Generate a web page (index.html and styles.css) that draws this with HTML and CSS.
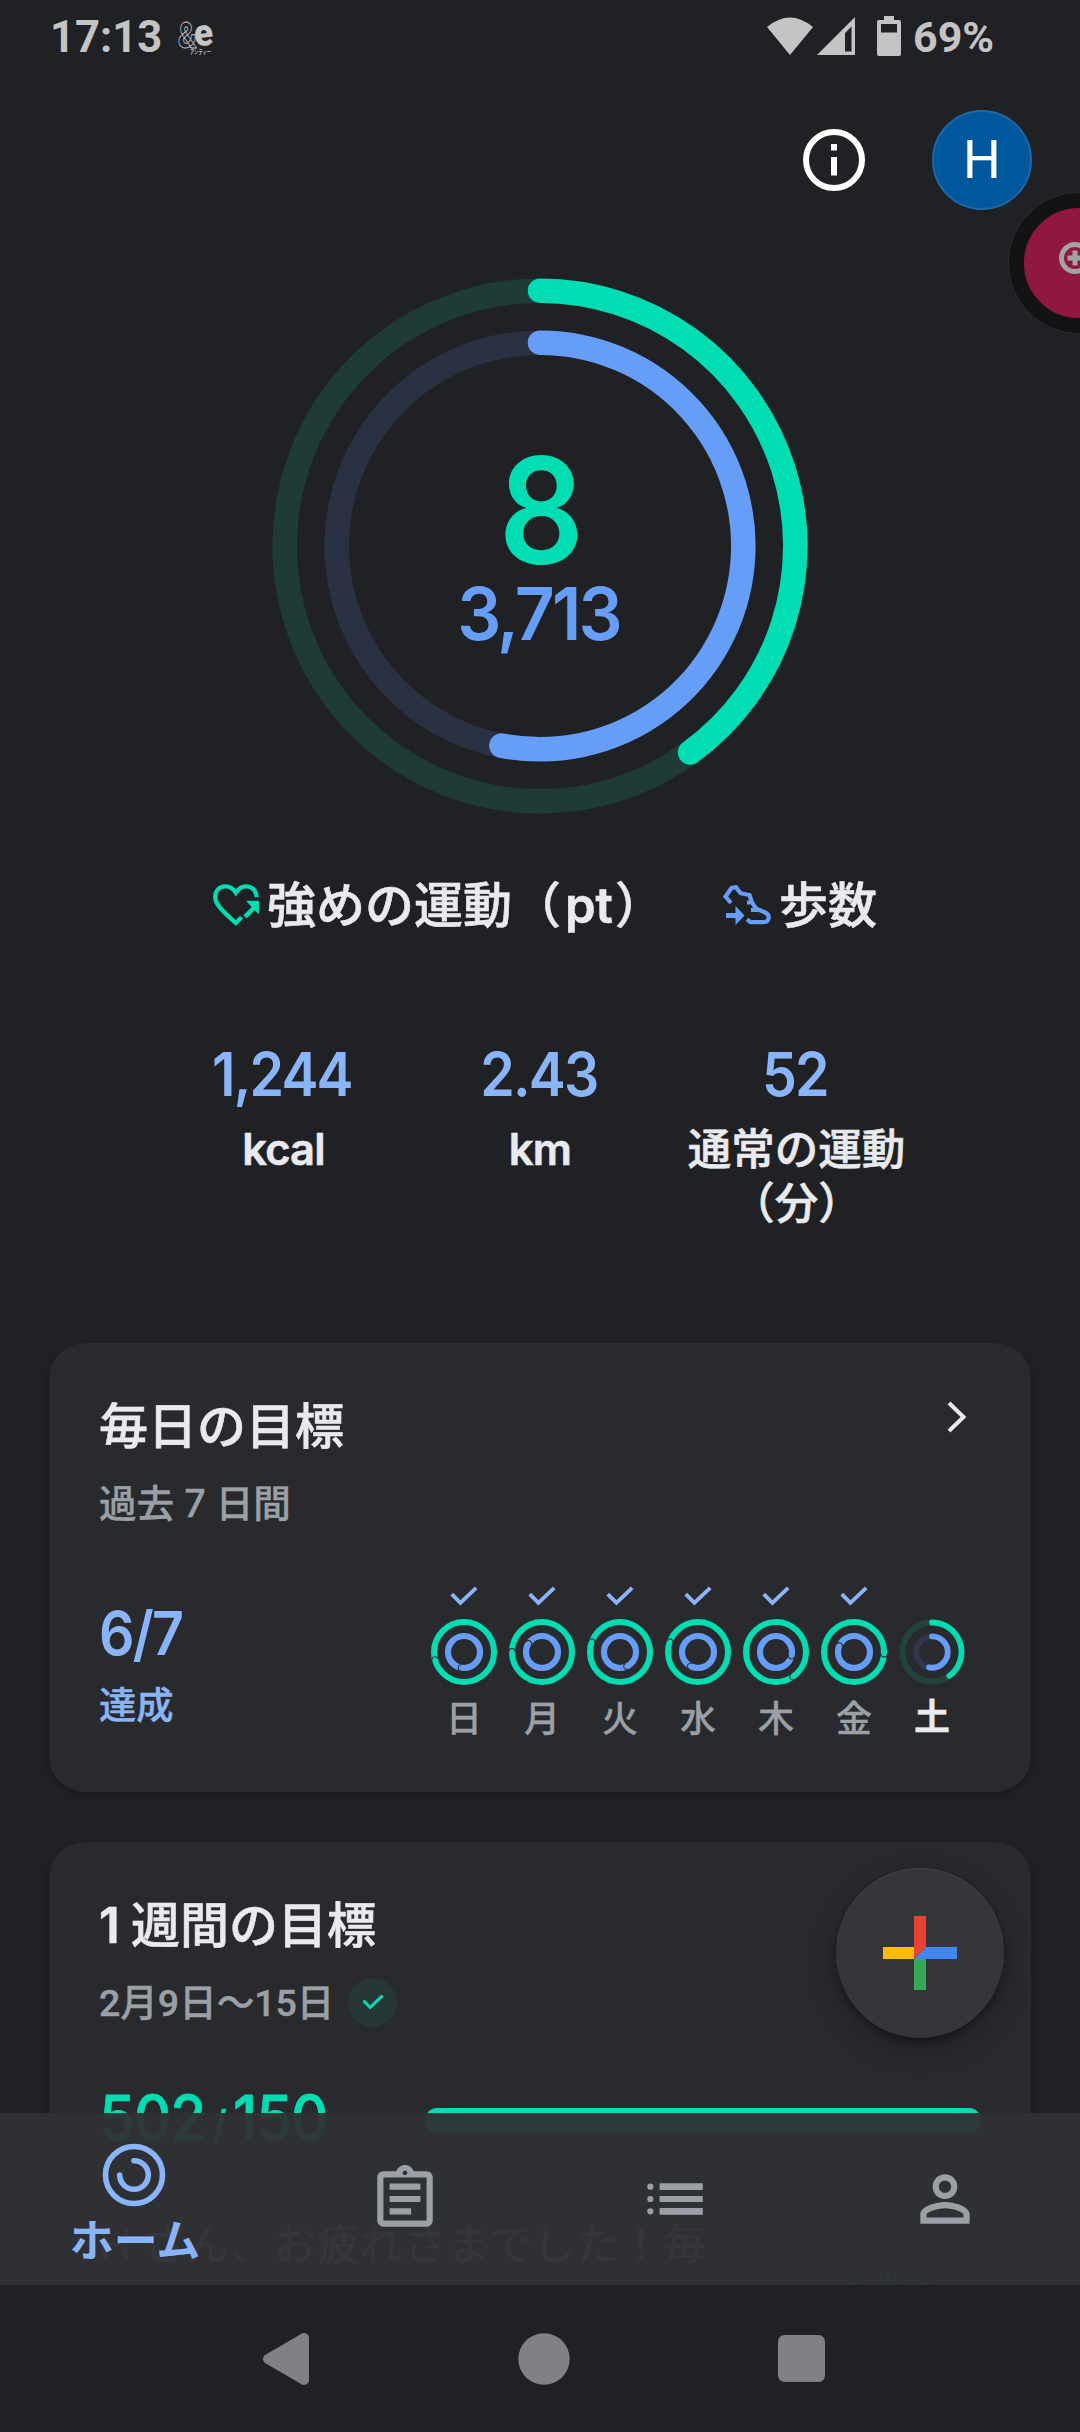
FILE: index.html
```html
<!DOCTYPE html>
<html lang="ja">
<head>
<meta charset="utf-8">
<title>ホーム</title>
<link rel="stylesheet" href="styles.css">
</head>
<body>
<svg class="defs" width="0" height="0" aria-hidden="true">
  <symbol id="tick" viewBox="0 0 28 20"><path d="M1.8 8.2 L10.4 16.8 L26.2 1.8" fill="none" stroke="currentColor" stroke-width="3.9"/></symbol>
  <symbol id="day-rings" viewBox="-33 -33 66 66">
    <circle r="30" fill="none" stroke="#00ddb3" stroke-width="6"/>
    <circle r="16" fill="none" stroke="#669df6" stroke-width="6.2"/>
  </symbol>
  <symbol id="seam-outer" viewBox="-33 -33 66 66"><path d="M0 -33 A3 3 0 0 1 0 -27" fill="none" stroke="#292a2d" stroke-width="1"/></symbol>
  <symbol id="seam-inner" viewBox="-33 -33 66 66"><path d="M0 -19 A3 3 0 0 1 0 -13" fill="none" stroke="#292a2d" stroke-width="1"/></symbol>
</svg>

<div class="screen">
  <header class="status">
    <span class="clock">17:13</span>
    <svg class="carrier" viewBox="0 0 38 36" width="38" height="36">
      <text x="0" y="27.500" font-family="Roboto" font-weight="900" font-size="36" textLength="19" lengthAdjust="spacingAndGlyphs" fill="none" stroke="#c4c4c4" stroke-width=".9">&amp;</text>
      <text x="16.500" y="25.500" font-family="Roboto" font-weight="900" font-size="38" textLength="19" lengthAdjust="spacingAndGlyphs" fill="#c4c4c4" transform="rotate(-6 26 18)">e</text>
      <text x="12" y="34" font-family="Noto Sans CJK JP" font-size="5.5" textLength="21" lengthAdjust="spacingAndGlyphs" fill="#c4c4c4">アンティー</text>
    </svg>
    <svg class="wifi" viewBox="0 0 46 38" width="46" height="38"><path d="M0 10 Q23 -9 46 10 L23 38Z" fill="#c4c4c4"/></svg>
    <svg class="signal" viewBox="0 0 38 38" width="38" height="38"><path fill-rule="evenodd" d="M38 0V38H0ZM34.500 9.500L28 16V34.500H34.500Z" fill="#c4c4c4"/></svg>
    <svg class="battery" viewBox="0 0 24 40" width="24" height="40"><path fill-rule="evenodd" d="M7 0H17V4H22Q24 4 24 6V38Q24 40 22 40H2Q0 40 0 38V6Q0 4 2 4H7ZM4 8V16.500H20V8Z" fill="#c4c4c4"/></svg>
    <span class="percent">69%</span>
  </header>

  <div class="appbar">
    <svg viewBox="0 0 62 62" width="62" height="62"><circle cx="31" cy="31" r="28" fill="none" stroke="#fff" stroke-width="6"/><path d="M28 15h6v6.500h-6zM28 28h6v18.500h-6z" fill="#fff"/></svg>
    <div class="avatar">H</div>
  </div>

  <section class="hero">
    <svg viewBox="-268 -268 536 536" width="536" height="536">
      <g fill="none" stroke-width="24.500">
        <circle r="255.300" stroke="#1e3b38"/>
        <circle r="203.300" stroke="#2a3142"/>
        <path d="M0 -255.300 A255.300 255.300 0 0 1 150.100 206.500" stroke="#00ddb3" stroke-linecap="round"/>
        <path d="M0 -203.300 A203.300 203.300 0 1 1 -38.600 199.600" stroke="#669df6" stroke-linecap="round"/>
      </g>
    </svg>
    <div class="totals">
      <div class="points">8</div>
      <div class="steps">3,713</div>
    </div>
  </section>

  <div class="legend">
    <svg viewBox="0 0 46 43" width="46" height="43">
      <path d="M43.500 13.200C43.500 6.500 38.800 2.300 33.400 2.300C29 2.300 25.200 4.900 22.800 8.700C20.400 4.900 16.600 2.300 12.200 2.300C6.300 2.300 2.200 7.100 2.200 12.500C2.200 20 7.500 25.300 22.700 39L28.700 33.200" fill="none" stroke="#00ddb3" stroke-width="4.300"/>
      <path d="M33 16.800H46V30.500L41.800 26.300L33.600 34.500L30.400 31.300L38.600 23Z" fill="#00ddb3"/>
    </svg>
    <span class="legend-points">強めの運動（<em>pt</em>）</span>
    <svg viewBox="0 0 48 40" width="48" height="40">
      <path d="M8 18L2.500 11.500L8.500 3L13 2.200L17.500 8.200L26.500 10L29 17.500L33 23.500L42 27.500Q46 29.500 45.700 32.500Q45.500 37.200 40 37.200H27.500L24 34.300M24 17.500H30M28 25H35" fill="none" stroke="#669df6" stroke-width="4.200"/>
      <path d="M3 28H12.500V21L21.500 30.500L12.500 40V33H3Z" fill="#669df6"/>
    </svg>
    <span>歩数</span>
  </div>

  <div class="stats">
    <div class="stat"><b>1,244</b><span><em>kcal</em></span></div>
    <div class="stat"><b>2.43</b><span><em>km</em></span></div>
    <div class="stat"><b>52</b><span>通常の運動<br>（分）</span></div>
  </div>

  <section class="card daily">
    <div class="card-head">
      <h2>毎日の目標</h2>
      <svg viewBox="0 0 20 32" width="20" height="32"><path d="M2 2L16.500 16L2 30" fill="none" stroke="#e8eaed" stroke-width="4"/></svg>
    </div>
    <p class="sub">過去 7 日間</p>
    <div class="daily-body">
      <div class="achieved"><b>6/7</b><span>達成</span></div>
      <div class="days">
        <div class="day"><svg class="tick"><use href="#tick"/></svg><svg class="rings" viewBox="0 0 66 66"><use href="#day-rings"/><use href="#seam-outer" transform="rotate(255 33 33)"/><use href="#seam-inner" transform="rotate(190 33 33)"/></svg><span>日</span></div>
        <div class="day"><svg class="tick"><use href="#tick"/></svg><svg class="rings" viewBox="0 0 66 66"><use href="#day-rings"/><use href="#seam-outer" transform="rotate(271 33 33)"/><use href="#seam-inner" transform="rotate(302 33 33)"/></svg><span>月</span></div>
        <div class="day"><svg class="tick"><use href="#tick"/></svg><svg class="rings" viewBox="0 0 66 66"><use href="#day-rings"/><use href="#seam-outer" transform="rotate(290 33 33)"/><use href="#seam-inner" transform="rotate(155 33 33)"/></svg><span>火</span></div>
        <div class="day"><svg class="tick"><use href="#tick"/></svg><svg class="rings" viewBox="0 0 66 66"><use href="#day-rings"/><use href="#seam-outer" transform="rotate(290 33 33)"/><use href="#seam-inner" transform="rotate(208 33 33)"/></svg><span>水</span></div>
        <div class="day"><svg class="tick"><use href="#tick"/></svg><svg class="rings" viewBox="0 0 66 66"><use href="#day-rings"/><use href="#seam-outer" transform="rotate(146 33 33)"/><use href="#seam-inner" transform="rotate(104 33 33)"/></svg><span>木</span></div>
        <div class="day"><svg class="tick"><use href="#tick"/></svg><svg class="rings" viewBox="0 0 66 66"><use href="#day-rings"/><use href="#seam-outer" transform="rotate(94 33 33)"/><use href="#seam-inner" transform="rotate(293 33 33)"/></svg><span>金</span></div>
        <div class="day today"><svg class="tick"></svg><svg class="rings" viewBox="-33 -33 66 66"><g fill="none" stroke-width="5.800"><circle r="29.500" stroke="#24423e"/><circle r="15.700" stroke="#2f384a"/><path d="M0 -29.500A29.500 29.500 0 0 1 17.300 23.900" stroke="#00ddb3" stroke-linecap="round"/><path d="M0 -15.700A15.700 15.700 0 1 1 -3 15.400" stroke="#669df6" stroke-linecap="round"/></g></svg><span>土</span></div>
      </div>
    </div>
  </section>

  <section class="card weekly">
    <h2><span class="one">1</span>週間の目標</h2>
    <div class="range"><span>2月9日〜15日</span><i class="badge"><svg width="22" height="16" viewBox="0 0 28 20"><use href="#tick"/></svg></i></div>
    <div class="progress"><b>502<i>/</i>150</b><div class="bar"></div></div>
    <p class="message">H さん、お疲れさまでした！毎</p>
    <svg class="confetti" width="90" height="16" viewBox="0 0 90 16"><path d="M2 15L10 11M40 1V15M30 12L35 9M45 9L52 13M75 12L82 15" stroke="#0f8f96" stroke-width="4" fill="none"/></svg>
  </section>

  <button class="bubble"><svg width="32" height="32" viewBox="0 0 32 32"><circle cx="16" cy="16" r="13.500" fill="none" stroke="#a3a3a3" stroke-width="5"/><path d="M8.500 16H23.500M16 8.500V23.500" stroke="#a3a3a3" stroke-width="5"/></svg></button>

  <button class="fab"><svg width="74" height="74" viewBox="0 0 74 74"><path fill="#fbbc04" d="M0 31H31V43H0z"/><path fill="#34a853" d="M31 43H43V74H31z"/><path fill="#4285f4" d="M43 31H74V43H31z"/><path fill="#ea4335" d="M31 0H43V31L31 43z"/></svg></button>

  <footer class="dock">
    <nav class="tabs">
      <a class="tab active">
        <svg viewBox="-32 -32 64 64" width="64" height="64"><g fill="none" stroke="#8ab4f8" stroke-width="5.600"><circle r="28.500"/><path d="M0 -14.300A14.300 14.300 0 1 1 -14.300 0" stroke-linecap="round"/></g></svg>
        <span>ホーム</span>
      </a>
      <a class="tab"><svg viewBox="0 0 24 24" width="74" height="74"><path fill="#9aa0a6" d="M7 15h7v2H7zm0-4h10v2H7zm0-4h10v2H7zm12-4h-4.180C14.400 1.840 13.300 1 12 1s-2.400.840-2.820 2H5c-1.100 0-2 .900-2 2v14c0 1.100.900 2 2 2h14c1.100 0 2-.900 2-2V5c0-1.100-.900-2-2-2zm-7-.250c.410 0 .750.340.750.750s-.340.750-.750.750-.750-.340-.750-.750.340-.750.750-.750zM19 19H5V5h14v14z"/></svg></a>
      <a class="tab"><svg viewBox="0 0 24 24" width="74" height="74"><g fill="#9aa0a6"><circle cx="4" cy="8" r="1"/><circle cx="4" cy="12" r="1"/><circle cx="4" cy="16" r="1"/><path d="M7 6.900h14v2.150H7zM7 11h14v2H7zM7 14.950h14v2.150H7z"/></g></svg></a>
      <a class="tab"><svg viewBox="0 0 24 24" width="74" height="74"><path fill="#9aa0a6" d="M12 6c1.100 0 2 .900 2 2s-.900 2-2 2-2-.900-2-2 .900-2 2-2m0 9c2.700 0 5.800 1.290 6 2v1H6v-.990c.200-.720 3.300-2.010 6-2.010m0-11C9.790 4 8 5.790 8 8s1.790 4 4 4 4-1.790 4-4-1.790-4-4-4zm0 9c-2.670 0-8 1.340-8 4v3h16v-3c0-2.660-5.330-4-8-4z"/></svg></a>
    </nav>
    <div class="sysnav">
      <svg width="46" height="52" viewBox="0 0 46 52"><path d="M5 26L41 5V47Z" fill="#808184" stroke="#808184" stroke-width="10" stroke-linejoin="round"/></svg>
      <svg width="52" height="52" viewBox="0 0 52 52"><circle cx="26" cy="26" r="25.700" fill="#808184"/></svg>
      <svg width="47" height="47" viewBox="0 0 47 47"><rect width="47" height="47" rx="6.500" fill="#808184"/></svg>
    </div>
  </footer>
</div>
</body>
</html>
```

FILE: styles.css
```css
* { box-sizing: border-box; }
body {
  margin: 0;
  background: #202124;
  color: #e8eaed;
  font-family: Inter, "Noto Sans CJK JP", sans-serif;
  font-weight: 500;
}
svg { display: block; flex: none; }
.defs { position: absolute; }
h2, p { margin: 0; font-weight: 500; }
b, i { font-weight: 600; font-style: normal; }
em { font-weight: 600; font-style: normal; letter-spacing: -.8px; }
button { border: 0; padding: 0; }
.screen { position: relative; width: 1080px; height: 2432px; overflow: hidden; }

.status { display: flex; height: 72px; padding-left: 50px; color: #c4c4c4; font: 700 43.500px/50px Roboto, sans-serif; }
.clock { width: 128px; margin-top: 13px; }
.carrier { margin-top: 20px; overflow: visible; }
.wifi { margin: 17px 4px 0 551px; }
.signal { margin-top: 17px; }
.battery { margin: 16px 12px 0 22px; }
.percent { margin-top: 12px; font-size: 43px; }

.appbar { display: flex; align-items: center; justify-content: flex-end; gap: 67px; height: 175px; padding-right: 48px; }
.avatar { width: 100px; height: 100px; border: 2px solid #1f67a8; border-radius: 50%; background: #01579b; color: #fff; font: 400 53px/97px Roboto, sans-serif; text-align: center; }

.hero { display: grid; justify-items: center; margin-top: 31px; }
.hero > * { grid-area: 1 / 1; }
.totals { padding-top: 178px; text-align: center; font-weight: 600; }
.points { padding-left: 2px; color: #00ddb3; font-size: 148px; line-height: 110px; transform: scaleX(.9); }
.steps { margin: 18px 4px 0 0; color: #669df6; font-size: 73px; line-height: 60px; letter-spacing: -3px; transform: scaleX(.95); }

.legend { display: flex; align-items: center; height: 60px; margin-top: 61px; padding-left: 213px; font-size: 49px; line-height: 60px; white-space: nowrap; }
.legend span { margin: 2px 0 0 8px; -webkit-text-stroke: .6px; }
.legend .legend-points { width: 397px; margin-right: 59px; }
.legend em { margin: 0 2px 0 4px; letter-spacing: 0; }

.stats { display: grid; grid-template-columns: repeat(3, 256.500px); justify-content: center; margin-top: 108px; height: 187px; text-align: center; }
.stat b { display: block; padding-right: 3px; color: #8ab4f8; font-size: 60px; line-height: 62px; height: 60px; letter-spacing: -2px; transform: scaleX(.925); }
.stat span { display: block; margin-top: 19px; font-size: 43.500px; line-height: 54px; -webkit-text-stroke: .6px; }

.card { width: 982px; margin: 0 0 50px 49px; padding: 54px 50px 0; border-radius: 36px; background: #292a2d; box-shadow: 0 3px 6px rgba(0,0,0,.25); }
.card h2 { font-size: 49px; line-height: 60px; -webkit-text-stroke: .6px; }
.daily { height: 449px; margin-top: 113px; }
.card-head { display: flex; justify-content: space-between; padding-right: 14px; }
.card-head svg { margin-top: 4px; }
.sub { margin-top: 23px; color: #9aa0a6; font-size: 37.600px; line-height: 48px; -webkit-text-stroke: .4px; }
.daily-body { display: flex; justify-content: space-between; margin: 58px 10px 0 0; }
.achieved { color: #8ab4f8; padding-top: 17px; }
.achieved b { display: block; font-size: 61px; line-height: 60px; letter-spacing: -2px; transform: scaleX(.91); transform-origin: left; }
.achieved span { display: block; margin-top: 19px; font-size: 37.300px; line-height: 48px; -webkit-text-stroke: .4px; }
.days { display: grid; grid-template-columns: repeat(7, 78px); }
.day { display: flex; flex-direction: column; align-items: center; color: #9aa0a6; font-size: 36px; line-height: 40px; -webkit-text-stroke: .3px; }
.tick { width: 28px; height: 20px; color: #8ab4f8; }
.rings { width: 66px; height: 66px; margin: 13px 0 14px; }
.today { color: #e8eaed; font-weight: 700; }
.today span { margin-top: -2px; }

.weekly { position: relative; height: 600px; }
.one { display: inline-block; width: 32px; font-weight: 600; }
.range { display: flex; align-items: center; gap: 14px; height: 48px; margin-top: 22px; color: #9aa0a6; font: 500 37.500px/48px Roboto, "Noto Sans CJK JP", sans-serif; }
.range span { padding-top: 2px; -webkit-text-stroke: .4px; }
.badge { display: grid; place-items: center; width: 49px; height: 49px; border-radius: 50%; background: #263835; color: #00ddb3; }
.progress { display: flex; align-items: center; justify-content: space-between; height: 60px; margin-top: 64px; }
.progress b { flex: none; width: 240px; padding-top: 3px; color: #00ddb3; font-weight: 500; font-size: 62px; line-height: 60px; letter-spacing: -1px; white-space: nowrap; transform: scaleX(.935); transform-origin: left; -webkit-text-stroke: .8px; }
.progress i { margin: 0 8px; font-size: 40px; font-weight: 500; }
.bar { width: 556px; height: 25px; border-radius: 12px; background: #00ddb3; }
.message { margin-top: 64px; color: #9aa0a6; font-size: 43.300px; line-height: 60px; white-space: nowrap; font-weight: 400; }
.confetti { margin: -4px 0 0 749px; }

.bubble { position: absolute; left: 1009px; top: 193px; width: 140px; height: 140px; border: 15px solid #131316; outline: 1px solid #2a2a2c; border-radius: 50%; background: #911743; }
.bubble svg { margin: -10px 0 0 35px; }
.fab { position: absolute; left: 836px; top: 1868px; display: grid; place-items: center; width: 168px; height: 170px; border-radius: 50%; background: #353639; box-shadow: 0 10px 28px rgba(0,0,0,.28), 0 3px 6px rgba(0,0,0,.3), inset 0 1px 0 #434447; }

.dock { position: absolute; left: 0; right: 0; bottom: 0; }
.tabs { display: grid; grid-template-columns: repeat(4, 1fr); height: 172px; background: rgba(48,49,52,.955); }
.tab { display: flex; flex-direction: column; align-items: center; justify-content: center; }
.active { justify-content: flex-start; padding-top: 30px; color: #8ab4f8; font-size: 44px; line-height: 50px; font-weight: 700; }
.active span { margin-top: 9px; }
.active svg { margin-left: -2px; }
.sysnav { display: flex; align-items: center; height: 147px; padding-left: 263px; background: #202124; }
.sysnav svg + svg { margin-left: 208.500px; }
.sysnav svg + svg + svg { margin-left: 208px; }
```
